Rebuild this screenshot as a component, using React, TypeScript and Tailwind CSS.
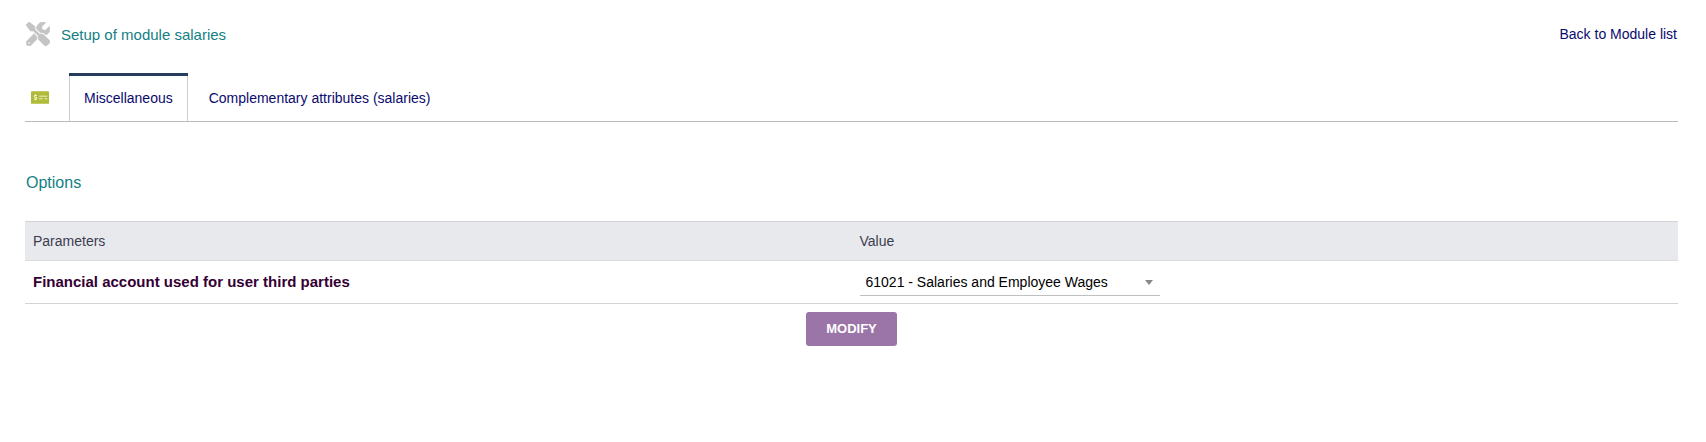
import { FaTools, FaMoneyCheckAlt } from "react-icons/fa";

const ACCOUNTS = ["61021 - Salaries and Employee Wages"];

function TitleBar() {
  return (
    <header className="flex h-7 items-center justify-between">
      <div className="flex items-center gap-[11px] pl-px">
        <FaTools
          className="size-6 stroke-[#c4c4c4] stroke-[14px] text-[#c4c4c4]"
          aria-hidden="true"
        />
        <h1 className="pt-[2px] text-[15px] text-[#148084]">Setup of module salaries</h1>
      </div>
      <a href="#modules" className="pr-px text-sm text-[#0a0a6e]">
        Back to Module list
      </a>
    </header>
  );
}

function Tabs() {
  return (
    <nav className="mt-[25px] flex h-[49px] items-stretch border-b border-[#bbbbbb] text-sm text-[#0a0a6e]">
      <span className="flex w-11 items-center pl-[6px]">
        <FaMoneyCheckAlt className="h-[15px] w-[18px] text-[#b0bb39]" aria-hidden="true" />
      </span>
      <a
        href="#misc"
        aria-current="page"
        className="flex flex-col border-x border-[#cccccc] text-center"
      >
        <span className="-mx-px h-[3px] bg-[#263c5c]" />
        <span className="flex grow items-center px-[14px] pb-[2px]">Miscellaneous</span>
      </a>
      <a href="#attributes" className="flex items-center px-[21px] pt-px">
        Complementary attributes (salaries)
      </a>
    </nav>
  );
}

export default function App() {
  return (
    <main className="px-[25px] pt-5 pr-7 font-['Liberation_Sans',Arial,sans-serif]">
      <TitleBar />
      <Tabs />
      <form onSubmit={(event) => event.preventDefault()}>
        <h2 className="mt-[49px] pl-px text-base leading-6 text-[#148084]">Options</h2>
        <table className="mt-[26px] w-full table-fixed border-separate border-spacing-0 text-left text-sm">
          <thead>
            <tr className="bg-[#e8e9ed] text-[#3c3c50]">
              <th className="h-10 border-y border-t-[#d3d3d3] border-b-[#dcdcdc] px-2 py-0 font-normal">
                Parameters
              </th>
              <th className="h-10 border-y border-t-[#d3d3d3] border-b-[#dcdcdc] px-2 py-0 font-normal">
                Value
              </th>
            </tr>
          </thead>
          <tbody>
            <tr>
              <td className="h-[43px] border-b border-[#d3d3d3] px-2 py-0 text-[15px] font-bold text-[#340034]">
                <label htmlFor="account">Financial account used for user third parties</label>
              </td>
              <td className="h-[43px] border-b border-[#d3d3d3] px-2 py-0">
                <div className="relative w-[300px]">
                  <select
                    id="account"
                    className="block h-7 w-full appearance-none border-b border-[#c0c0c0] bg-transparent pr-6 pl-[6px] text-sm text-black"
                  >
                    {ACCOUNTS.map((account) => (
                      <option key={account}>{account}</option>
                    ))}
                  </select>
                  <span className="pointer-events-none absolute top-3 right-[7px] border-x-4 border-t-5 border-x-transparent border-t-[#888888]" />
                </div>
              </td>
            </tr>
          </tbody>
        </table>
        <div className="flex justify-center pt-2">
          <button
            type="submit"
            className="h-[34px] rounded-[3px] bg-[#9c75a8] px-5 text-[13px] font-bold text-white uppercase"
          >
            Modify
          </button>
        </div>
      </form>
    </main>
  );
}
